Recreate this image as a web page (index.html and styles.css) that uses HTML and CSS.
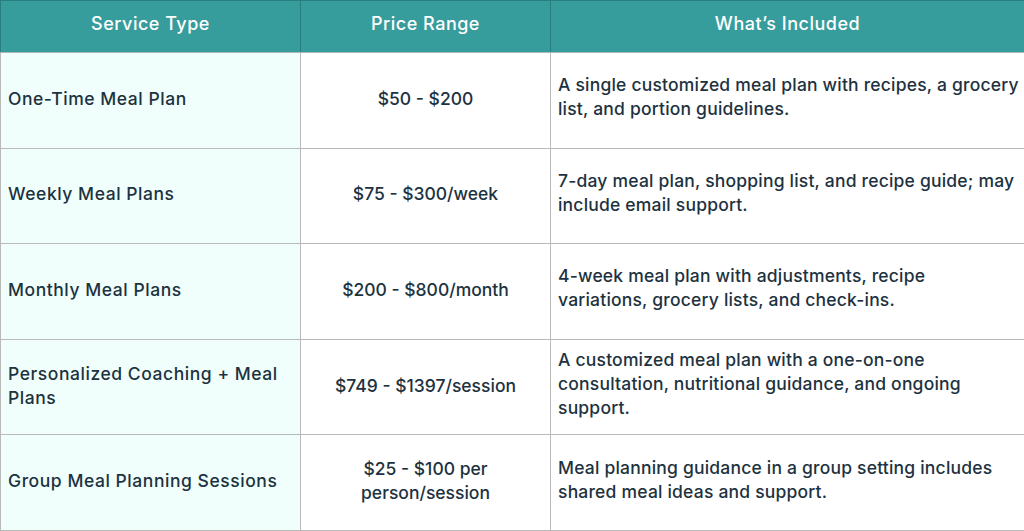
FILE: index.html
```html
<!DOCTYPE html>
<html>
<head>
<meta charset="utf-8">
<link rel="stylesheet" href="styles.css">
</head>
<body>
<table class="pricing">
  <colgroup>
    <col class="c1">
    <col class="c2">
    <col class="c3">
  </colgroup>
  <thead>
    <tr class="head-row">
      <th>Service Type</th>
      <th>Price Range</th>
      <th>What’s Included</th>
    </tr>
  </thead>
  <tbody>
    <tr class="body-row">
      <td class="svc">One-Time Meal Plan</td>
      <td class="price">$50 - $200</td>
      <td class="desc">A single customized meal plan with recipes, a grocery list, and portion guidelines.</td>
    </tr>
    <tr class="body-row">
      <td class="svc">Weekly Meal Plans</td>
      <td class="price">$75 - $300/week</td>
      <td class="desc">7-day meal plan, shopping list, and recipe guide; may include email support.</td>
    </tr>
    <tr class="body-row">
      <td class="svc">Monthly Meal Plans</td>
      <td class="price">$200 - $800/month</td>
      <td class="desc">4-week meal plan with adjustments, recipe<br>variations, grocery lists, and check-ins.</td>
    </tr>
    <tr class="body-row">
      <td class="svc">Personalized Coaching + Meal Plans</td>
      <td class="price">$749 - $1397/session</td>
      <td class="desc">A customized meal plan with a one-on-one consultation, nutritional guidance, and ongoing support.</td>
    </tr>
    <tr class="body-row">
      <td class="svc">Group Meal Planning Sessions</td>
      <td class="price">$25 - $100 per person/session</td>
      <td class="desc">Meal planning guidance in a group setting includes shared meal ideas and support.</td>
    </tr>
  </tbody>
</table>
</body>
</html>
```

FILE: styles.css
```css
html, body {
  margin: 0;
  padding: 0;
  background: #ffffff;
}

.pricing {
  width: 1024px;
  border-collapse: collapse;
  table-layout: fixed;
  font-family: "Inter", "Noto Sans", sans-serif;
  font-weight: 500;
  color: #1d3240;
  font-size: 17.5px;
  letter-spacing: 0.2px;
  line-height: 24px;
}

.c1 { width: 300px; }
.c2 { width: 250px; }
.c3 { width: 474px; }

.head-row { height: 52px; }
.body-row { height: 95.6px; }

.pricing th {
  background: #379c9c;
  color: #ffffff;
  font-weight: 500;
  font-size: 18px;
  letter-spacing: 0.5px;
  padding: 0 8px 5px;
  text-align: center;
  border: 1px solid #2a7d7d;
  border-bottom: 1px solid #a9b8b8;
}

.pricing td {
  padding: 0 4px 3px 7px;
  border: 1px solid #b9b9b9;
  vertical-align: middle;
}

.pricing td.svc {
  background: #f0fffc;
  letter-spacing: 0.55px;
}

.pricing td.price {
  text-align: center;
  letter-spacing: 0;
  padding: 0 30px 3px;
}

.pricing td.desc {
  text-align: left;
  padding-bottom: 6px;
}
```
